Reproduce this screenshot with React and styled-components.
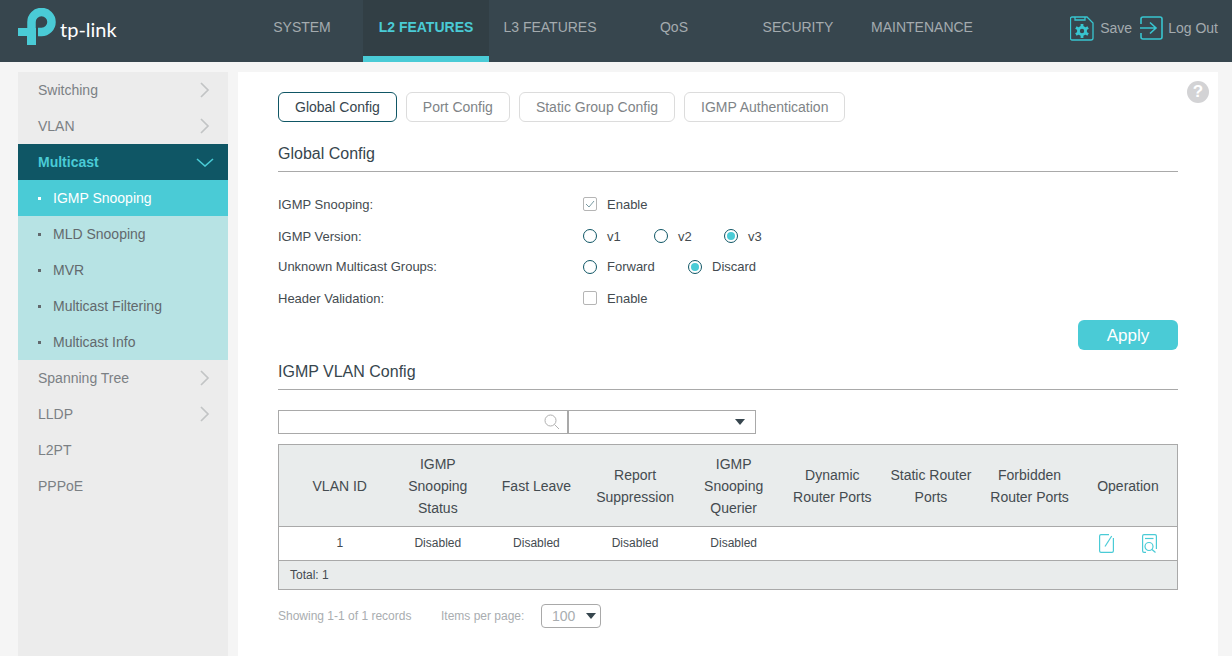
import React from 'react';
import styled, { createGlobalStyle } from 'styled-components';

const GlobalStyle = createGlobalStyle`
  html, body {
    margin: 0;
    height: 100%;
    overflow: hidden;
    background: #f5f5f5;
    font-family: "Liberation Sans", Arial, sans-serif;
  }
`;

const Page = styled.div`
  width: 1232px;
  height: 656px;
  overflow: hidden;
`;

const Header = styled.header`
  height: 62px;
  background: #37464e;
  display: flex;
`;

const LogoBox = styled.div`
  width: 240px;
  flex: none;
  display: flex;
  align-items: flex-start;
  padding: 8px 0 0 18px;
  box-sizing: border-box;
`;

const LogoText = styled.span`
  font-family: Lato, "Liberation Sans", sans-serif;
  font-size: 20px;
  line-height: 24px;
  color: #fff;
  margin: 9px 0 0 4px;
`;

const Nav = styled.nav`
  display: flex;
  flex: none;
`;

const NavItem = styled.a`
  width: ${(p) => (p.$active ? '126px' : '124px')};
  margin: ${(p) => (p.$active ? '0 -1px' : '0')};
  height: 62px;
  box-sizing: border-box;
  display: flex;
  align-items: center;
  justify-content: center;
  padding-bottom: ${(p) => (p.$active ? '2px' : '8px')};
  font-size: 14px;
  white-space: nowrap;
  color: ${(p) => (p.$active ? '#4acbd6' : '#a4abaf')};
  font-weight: ${(p) => (p.$active ? 'bold' : 'normal')};
  background: ${(p) => (p.$active ? '#323f45' : 'transparent')};
  border-bottom: ${(p) => (p.$active ? '6px solid #4acbd6' : '0')};
`;

const HeaderActions = styled.div`
  flex: 1;
  display: flex;
  justify-content: flex-end;
  gap: 8px;
  padding: 15px 14px 0 0;
`;

const HeaderBtn = styled.a`
  display: flex;
  align-items: center;
  gap: 5px;
  height: 26px;
  font-size: 14px;
  color: #a4abaf;
`;

const Body = styled.div`
  display: flex;
  gap: 10px;
  padding: 10px 14px 0 18px;
`;

const Sidebar = styled.aside`
  width: 210px;
  height: 584px;
  flex: none;
  background: #ececec;
`;

const MenuRow = styled.div`
  height: 36px;
  display: flex;
  align-items: center;
  justify-content: space-between;
  padding: 0 18px 0 20px;
  font-size: 14px;
  color: #7b8084;
`;

const MenuOpenRow = styled(MenuRow)`
  padding-right: 14px;
  background: #0f5665;
  color: #4acbd6;
  font-weight: bold;
`;

const SubRow = styled.div`
  height: 36px;
  display: flex;
  align-items: center;
  gap: 12px;
  padding-left: 20px;
  font-size: 14px;
  background: ${(p) => (p.$active ? '#4acbd6' : '#b7e3e4')};
  color: ${(p) => (p.$active ? '#fff' : '#62696d')};
`;

const Dot = styled.i`
  width: 3px;
  height: 3px;
  background: ${(p) => (p.$active ? '#fff' : '#62696d')};
`;

const Content = styled.main`
  position: relative;
  width: 980px;
  height: 584px;
  flex: none;
  box-sizing: border-box;
  background: #fff;
  padding: 20px 40px 0;
`;

const Help = styled.span`
  position: absolute;
  top: 9px;
  right: 9px;
  width: 22px;
  height: 22px;
  border-radius: 50%;
  background: #d3d3d5;
  color: #fff;
  font-size: 17px;
  font-weight: bold;
  line-height: 22px;
  text-align: center;
`;

const Tabs = styled.div`
  display: flex;
  gap: 9px;
`;

const Tab = styled.a`
  height: 30px;
  box-sizing: border-box;
  padding: 0 16px;
  display: flex;
  align-items: center;
  font-size: 14px;
  border-radius: 6px;
  border: 1px solid ${(p) => (p.$active ? '#0f5665' : '#dcdcdc')};
  color: ${(p) => (p.$active ? '#37464e' : '#808487')};
`;

const SectionTitle = styled.h2`
  margin: ${(p) => p.$top}px 0 0;
  height: 30px;
  padding-top: 2px;
  box-sizing: border-box;
  border-bottom: 1px solid #a9a9a9;
  font-size: 16px;
  font-weight: normal;
  line-height: 20px;
  color: #37464e;
`;

const Form = styled.div`
  margin-top: 16px;
`;

const FormRow = styled.div`
  height: ${(p) => p.$h}px;
  display: flex;
  align-items: center;
  font-size: 13px;
  color: #444b50;
`;

const FormLabel = styled.div`
  width: 305px;
`;

const Option = styled.label`
  display: flex;
  align-items: center;
  gap: 10px;
  width: ${(p) => p.$w}px;
`;

const Radio = styled.span`
  width: 14px;
  height: 14px;
  box-sizing: border-box;
  border-radius: 50%;
  border: 1.5px solid #0f5665;
  display: flex;
  align-items: center;
  justify-content: center;
  &::after {
    content: '';
    width: 8px;
    height: 8px;
    border-radius: 50%;
    background: ${(p) => (p.$on ? '#4acbd6' : 'transparent')};
  }
`;

const Check = styled.span`
  width: 14px;
  height: 14px;
  box-sizing: border-box;
  border: 1px solid #b5b5b5;
  border-radius: 2px;
  display: flex;
  align-items: center;
  justify-content: center;
`;

const ApplyRow = styled.div`
  display: flex;
  justify-content: flex-end;
  margin-top: 5px;
`;

const Apply = styled.button`
  width: 100px;
  height: 30px;
  padding: 2px 0 0;
  border: 0;
  border-radius: 6px;
  background: #4acbd6;
  color: #fff;
  font: 17px "Liberation Sans", Arial, sans-serif;
`;

const Filters = styled.div`
  display: flex;
  margin-top: 20px;
`;

const SearchBox = styled.div`
  width: 290px;
  height: 24px;
  box-sizing: border-box;
  border: 1px solid #a9a9a9;
  display: flex;
  align-items: center;
  justify-content: flex-end;
  padding-right: 7px;
`;

const SelectBox = styled.div`
  width: 188px;
  height: 24px;
  box-sizing: border-box;
  border: 1px solid #a9a9a9;
  display: flex;
  align-items: center;
  justify-content: flex-end;
  padding-right: 10px;
`;

const Caret = styled.i`
  width: 0;
  height: 0;
  border-left: 5px solid transparent;
  border-right: 5px solid transparent;
  border-top: 6px solid #37464e;
`;

const Table = styled.table`
  width: 900px;
  margin-top: 10px;
  border-collapse: collapse;
  table-layout: fixed;
  border: 1px solid #a9a9a9;
  color: #444b50;
  th {
    height: 81px;
    padding: 0 5px;
    background: #e9ecec;
    font-size: 14px;
    line-height: 22px;
    font-weight: normal;
    border-bottom: 1px solid #a9a9a9;
  }
  th:first-child {
    padding: 0 0 0 12px;
  }
  td {
    height: 34px;
    padding: 0 0 2px;
    box-sizing: border-box;
    font-size: 12px;
    text-align: center;
    border-bottom: 1px solid #a9a9a9;
  }
  td:first-child {
    padding: 0 0 2px 12px;
  }
  tfoot td,
  tfoot td:first-child {
    height: 29px;
    padding: 0 0 0 11px;
    background: #e9ecec;
    text-align: left;
    border-bottom: 0;
  }
`;

const OpIcons = styled.div`
  display: flex;
  justify-content: space-between;
  align-items: center;
  padding: 2px 20px 0 20px;
`;

const Pager = styled.div`
  display: flex;
  align-items: center;
  margin-top: 14px;
  font-size: 12px;
  color: #a9adb0;
`;

const PagerText = styled.span`
  width: ${(p) => p.$w}px;
`;

const PageSize = styled.div`
  width: 60px;
  height: 24px;
  box-sizing: border-box;
  border: 1px solid #a9a9a9;
  border-radius: 4px;
  display: flex;
  align-items: center;
  justify-content: space-between;
  padding: 0 4px 0 10px;
  font-size: 14px;
`;

const Logo = () => (
  <svg width="38" height="38" viewBox="18 8 38 38">
    <path d="M31.5 32V22a10 10 0 1 1 10 10H38" fill="none" stroke="#4acbd6" strokeWidth="8.5" />
    <path d="M18 28h18v17h-9v-9h-9z" fill="#4acbd6" />
  </svg>
);

const SaveIcon = () => (
  <svg width="25" height="25" viewBox="0 0 25 25" fill="none" stroke="#38c5d0" strokeWidth="1.3">
    <path d="M2 1h15l6 6v15a2 2 0 0 1-2 2H2a1.500 1.500 0 0 1-1.500-1.500V2.500A1.500 1.500 0 0 1 2 1z" />
    <path d="M5 1v3h10V1" />
    <circle cx="12" cy="15" r="3.600" strokeWidth="2.800" />
    <path strokeWidth="2.800" d="M12 8v3M12 19v3M5.900 11.500l2.600 1.500M15.500 17l2.600 1.500M5.900 18.500l2.600-1.500M15.500 13l2.600-1.500" />
  </svg>
);

const LogoutIcon = () => (
  <svg width="23" height="24" viewBox="0 0 23 24" fill="none" stroke="#38c5d0" strokeWidth="1.6">
    <path d="M1 8V3a2 2 0 0 1 2-2h17a2 2 0 0 1 2 2v18a2 2 0 0 1-2 2H3a2 2 0 0 1-2-2v-4" />
    <path d="M0 12h15.500M10 6.500l6 5.500-6 5.500" />
  </svg>
);

const Chevron = ({ down }) =>
  down ? (
    <svg width="18" height="9" viewBox="0 0 18 9" fill="none" stroke="#4acbd6" strokeWidth="1.6">
      <path d="M1 1l8 7 8-7" />
    </svg>
  ) : (
    <svg width="10" height="16" viewBox="0 0 10 16" fill="none" stroke="#c2c4c5" strokeWidth="1.7">
      <path d="M1 1l7 7-7 7" />
    </svg>
  );

const SearchIcon = () => (
  <svg width="16" height="16" viewBox="0 0 16 16" fill="none" stroke="#b0b0b0" strokeWidth="1">
    <circle cx="6.500" cy="6.500" r="5.500" />
    <path d="M10.500 10.500l4.500 4.500" />
  </svg>
);

const EditIcon = () => (
  <svg width="15" height="19" viewBox="0 0 15 19" fill="none" stroke="#4acbd6" strokeWidth="1.2">
    <path d="M10 .6H2A1.500 1.500 0 0 0 .6 2v15A1.500 1.500 0 0 0 2 18.400h11a1.500 1.500 0 0 0 1.400-1.400V4" />
    <path d="M12.700 2L6 12.500" />
  </svg>
);

const DetailIcon = () => (
  <svg width="15" height="19" viewBox="0 0 15 19" fill="none" stroke="#4acbd6" strokeWidth="1.2">
    <path d="M4 18.400H2A1.500 1.500 0 0 1 .6 17V2A1.500 1.500 0 0 1 2 .6h11A1.500 1.500 0 0 1 14.400 2v13" />
    <path d="M3 4.500h8.500" />
    <circle cx="7" cy="12.500" r="4" />
    <path d="M10 15.500l3.500 3" />
  </svg>
);

const CheckMark = () => (
  <svg width="10" height="10" viewBox="0 0 10 10" fill="none" stroke="#7a9ba3" strokeWidth="1">
    <path d="M1 5l3 3 5-6" />
  </svg>
);

const navItems = ['SYSTEM', 'L2 FEATURES', 'L3 FEATURES', 'QoS', 'SECURITY', 'MAINTENANCE'];
const subItems = ['IGMP Snooping', 'MLD Snooping', 'MVR', 'Multicast Filtering', 'Multicast Info'];
const tabs = ['Global Config', 'Port Config', 'Static Group Config', 'IGMP Authentication'];
const columns = [
  'VLAN ID',
  'IGMP Snooping Status',
  'Fast Leave',
  'Report Suppression',
  'IGMP Snooping Querier',
  'Dynamic Router Ports',
  'Static Router Ports',
  'Forbidden Router Ports',
  'Operation',
];

function App() {
  return (
    <Page>
      <GlobalStyle />
      <Header>
        <LogoBox>
          <Logo />
          <LogoText>tp-link</LogoText>
        </LogoBox>
        <Nav>
          {navItems.map((item) => (
            <NavItem key={item} $active={item === 'L2 FEATURES'}>
              {item}
            </NavItem>
          ))}
        </Nav>
        <HeaderActions>
          <HeaderBtn>
            <SaveIcon />
            Save
          </HeaderBtn>
          <HeaderBtn>
            <LogoutIcon />
            Log Out
          </HeaderBtn>
        </HeaderActions>
      </Header>
      <Body>
        <Sidebar>
          <MenuRow>
            Switching
            <Chevron />
          </MenuRow>
          <MenuRow>
            VLAN
            <Chevron />
          </MenuRow>
          <MenuOpenRow>
            Multicast
            <Chevron down />
          </MenuOpenRow>
          {subItems.map((item) => (
            <SubRow key={item} $active={item === 'IGMP Snooping'}>
              <Dot $active={item === 'IGMP Snooping'} />
              {item}
            </SubRow>
          ))}
          <MenuRow>
            Spanning Tree
            <Chevron />
          </MenuRow>
          <MenuRow>
            LLDP
            <Chevron />
          </MenuRow>
          <MenuRow>L2PT</MenuRow>
          <MenuRow>PPPoE</MenuRow>
        </Sidebar>
        <Content>
          <Help>?</Help>
          <Tabs>
            {tabs.map((tab) => (
              <Tab key={tab} $active={tab === 'Global Config'}>
                {tab}
              </Tab>
            ))}
          </Tabs>
          <SectionTitle $top={20}>Global Config</SectionTitle>
          <Form>
            <FormRow $h={32}>
              <FormLabel>IGMP Snooping:</FormLabel>
              <Option>
                <Check>
                  <CheckMark />
                </Check>
                Enable
              </Option>
            </FormRow>
            <FormRow $h={32}>
              <FormLabel>IGMP Version:</FormLabel>
              <Option $w={71}>
                <Radio />
                v1
              </Option>
              <Option $w={70}>
                <Radio />
                v2
              </Option>
              <Option>
                <Radio $on />
                v3
              </Option>
            </FormRow>
            <FormRow $h={29}>
              <FormLabel>Unknown Multicast Groups:</FormLabel>
              <Option $w={105}>
                <Radio />
                Forward
              </Option>
              <Option>
                <Radio $on />
                Discard
              </Option>
            </FormRow>
            <FormRow $h={34}>
              <FormLabel>Header Validation:</FormLabel>
              <Option>
                <Check />
                Enable
              </Option>
            </FormRow>
          </Form>
          <ApplyRow>
            <Apply>Apply</Apply>
          </ApplyRow>
          <SectionTitle $top={10}>IGMP VLAN Config</SectionTitle>
          <Filters>
            <SearchBox>
              <SearchIcon />
            </SearchBox>
            <SelectBox>
              <Caret />
            </SelectBox>
          </Filters>
          <Table>
            <colgroup>
              <col width="110" />
            </colgroup>
            <thead>
              <tr>
                {columns.map((col) => (
                  <th key={col}>{col}</th>
                ))}
              </tr>
            </thead>
            <tbody>
              <tr>
                <td>1</td>
                <td>Disabled</td>
                <td>Disabled</td>
                <td>Disabled</td>
                <td>Disabled</td>
                <td />
                <td />
                <td />
                <td>
                  <OpIcons>
                    <EditIcon />
                    <DetailIcon />
                  </OpIcons>
                </td>
              </tr>
            </tbody>
            <tfoot>
              <tr>
                <td colSpan="9">Total: 1</td>
              </tr>
            </tfoot>
          </Table>
          <Pager>
            <PagerText $w={163}>Showing 1-1 of 1 records</PagerText>
            <PagerText $w={100}>Items per page:</PagerText>
            <PageSize>
              100
              <Caret />
            </PageSize>
          </Pager>
        </Content>
      </Body>
    </Page>
  );
}

export default App;
